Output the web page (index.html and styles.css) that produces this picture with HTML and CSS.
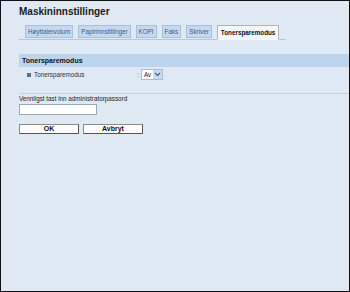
FILE: index.html
```html
<!DOCTYPE html>
<html lang="no">

<head>
    <meta charset="UTF-8">
    <meta name="viewport" content="width=device-width, initial-scale=1.0">
    <title>Maskininnstillinger</title>
    <link rel="stylesheet" href="styles.css">
</head>

<body>
    <div class="frame">
        <h1 class="title">Maskininnstillinger</h1>

        <div class="tabs">
            <span class="tab">Høyttalervolum</span>
            <span class="tab">Papirinnstillinger</span>
            <span class="tab">KOPI</span>
            <span class="tab">Faks</span>
            <span class="tab">Skriver</span>
            <span class="tab active">Tonersparemodus</span>
        </div>

        <div class="section">
            <h2 class="section-head">Tonersparemodus</h2>
            <div class="setting-row">
                <span class="bullet"></span>
                <span class="setting-label">Tonersparemodus</span>
                <span class="colon">:</span>
                <span class="select">
                    <span class="select-value">Av</span>
                    <span class="select-arrow">
                        <svg width="7" height="5" viewBox="0 0 7 5">
                            <path d="M1 1 L3.5 3.5 L6 1" fill="none" stroke="#3b5f9c" stroke-width="1.2" />
                        </svg>
                    </span>
                </span>
            </div>
        </div>

        <div class="login">
            <label class="login-label">Vennligst tast inn administratorpassord</label>
            <div class="password-box"></div>
            <div class="buttons">
                <button class="btn">OK</button>
                <button class="btn">Avbryt</button>
            </div>
        </div>
    </div>
</body>

</html>
```

FILE: styles.css
```css
* {
    margin: 0;
    padding: 0;
    box-sizing: border-box;
}

body {
    width: 350px;
    height: 292px;
    overflow: hidden;
    font-family: "Liberation Sans", Arial, sans-serif;
    color: #222;
}

.frame {
    width: 350px;
    height: 292px;
    border: 1px solid #111;
    background-color: #dfe9f4;
    padding: 5px 0 0 18px;
}

.title {
    font-size: 10px;
    font-weight: bold;
    color: #1a1a1a;
    line-height: 12px;
    margin-bottom: 6px;
}

.tabs {
    display: flex;
    align-items: flex-end;
    gap: 5px;
    width: 267px;
    padding-left: 6px;
    height: 16px;
    border-bottom: 1px solid #b9c6d3;
}

.tab {
    font-size: 6.3px;
    line-height: 11px;
    height: 13px;
    padding: 0 2px;
    margin-bottom: 1px;
    color: #3d5a86;
    background-color: #c5d9ee;
    border: 1px solid #a9c0da;
}

.tab.active {
    height: 15px;
    margin-bottom: -1px;
    padding: 1px 3px 0;
    color: #111;
    font-weight: bold;
    background-color: #f4f7fa;
    border: 1px solid #b4b4b4;
    border-bottom-color: #f4f7fa;
}

.section {
    margin-top: 14px;
    border-bottom: 1px solid #c4d2e0;
    padding-bottom: 12px;
}

.section-head {
    font-size: 7px;
    font-weight: bold;
    line-height: 13px;
    height: 13px;
    padding-left: 3px;
    background-color: #bdd5ec;
    color: #111;
}

.setting-row {
    display: flex;
    align-items: center;
    height: 13px;
    margin-top: 1px;
    padding-left: 8px;
    font-size: 6.3px;
}

.bullet {
    width: 4px;
    height: 4px;
    background-color: #5a6f8c;
    margin-right: 3px;
}

.setting-label {
    width: 103px;
    color: #333;
}

.colon {
    width: 4px;
    color: #555;
}

.select {
    display: flex;
    align-items: center;
    height: 11px;
    width: 22px;
    background-color: #fff;
    border: 1px solid #a9bdd4;
}

.select-value {
    flex: 1;
    padding-left: 2px;
    font-size: 6.3px;
    color: #222;
}

.select-arrow {
    display: flex;
    align-items: center;
    justify-content: center;
    width: 9px;
    height: 9px;
    background-color: #c9daee;
}

.login {
    padding-top: 1px;
}

.login-label {
    display: block;
    font-size: 6.3px;
    line-height: 8px;
    color: #222;
}

.password-box {
    width: 78px;
    height: 11px;
    margin-top: 1px;
    background-color: #fff;
    border: 1px solid #9aa9b8;
}

.buttons {
    display: flex;
    gap: 4px;
    margin-top: 9px;
}

.btn {
    width: 60px;
    height: 10px;
    font-family: inherit;
    font-size: 7px;
    font-weight: bold;
    line-height: 8px;
    color: #111;
    background-color: #fdfdfd;
    border: 1px solid #8a8a8a;
    border-right-color: #555;
    border-bottom-color: #555;
}
```
